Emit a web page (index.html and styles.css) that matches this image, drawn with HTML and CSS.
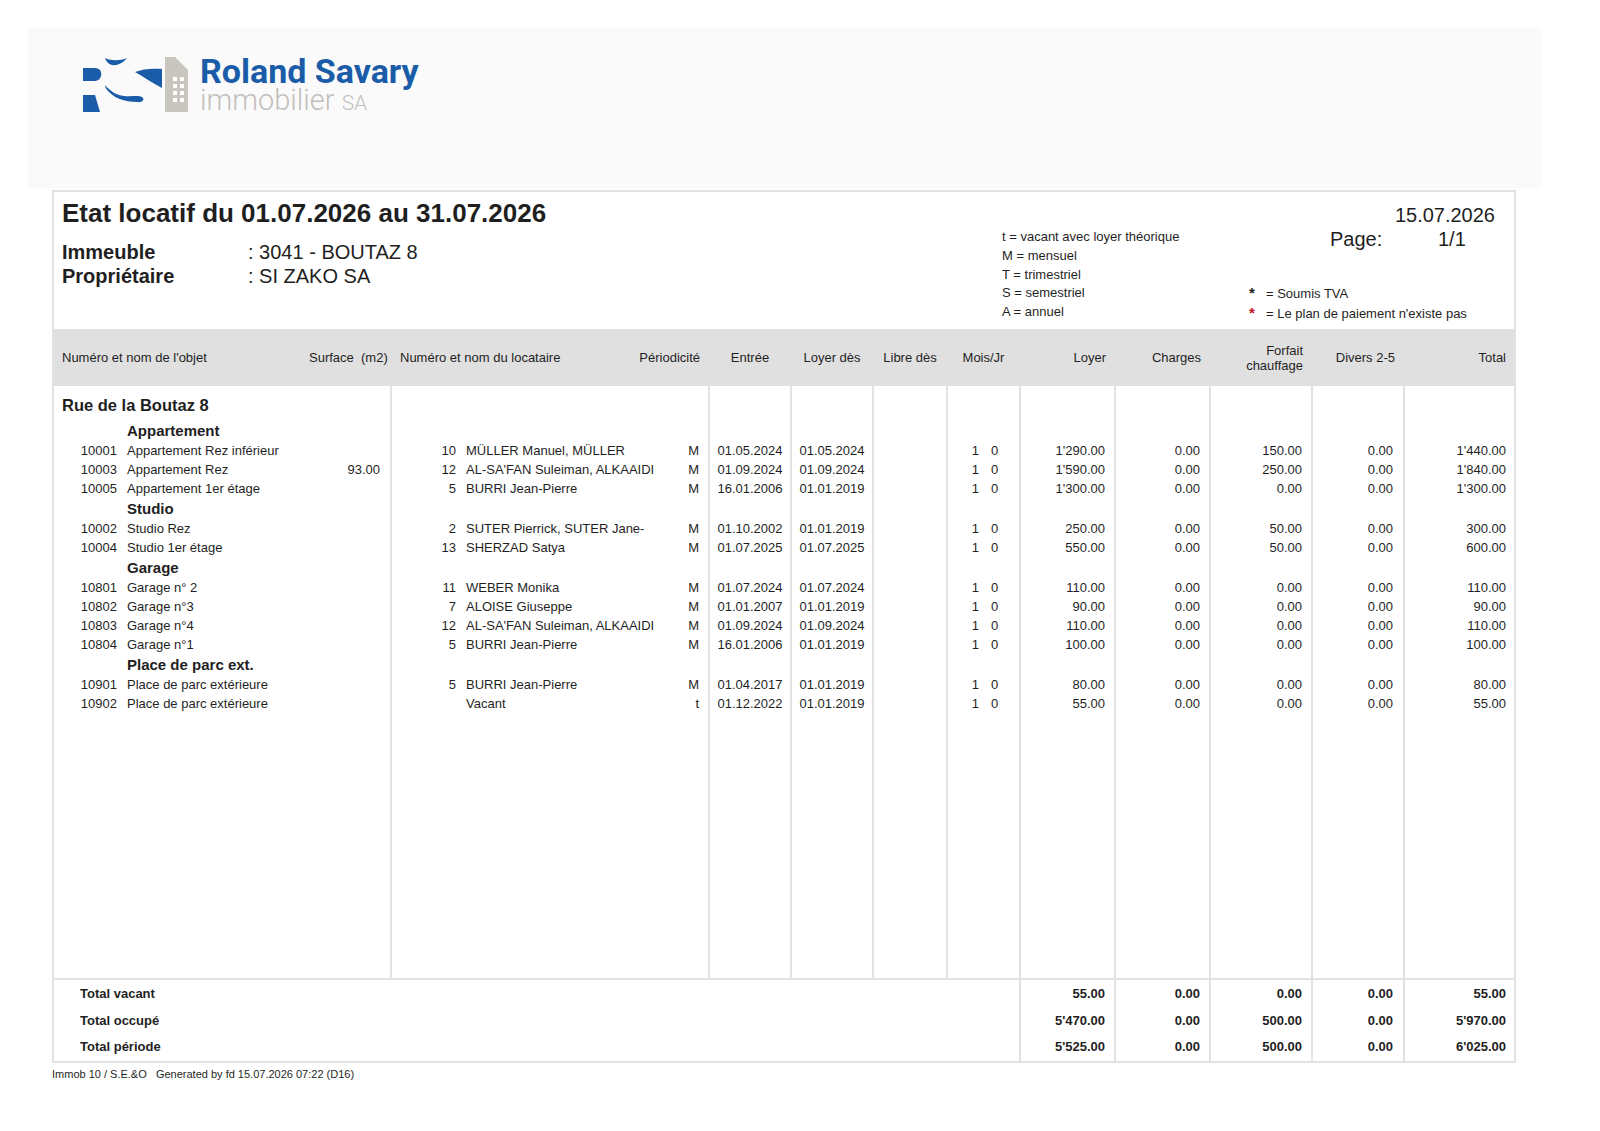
FILE: index.html
```html
<!DOCTYPE html>
<html lang="fr">
<head>
<meta charset="utf-8">
<title>Etat locatif</title>
<link rel="stylesheet" href="styles.css">
</head>
<body>
<div class="page">
  <header class="brand">
    <div class="logo">
      <svg class="logo-mark" width="110" height="58" viewBox="0 0 110 58" aria-hidden="true">
        <g fill="#1b5ca8">
          <path d="M3 13 H15 C20 13 22 17 21 21 C20 25 17 26 14 26 H3 Z"/>
          <path d="M3 40 H15 L20 57 H3 Z"/>
          <path d="M25 3 C31 6 40 6 47 3 C43 8 37 11 32 10 C28 9 26 6 25 3 Z"/>
          <path d="M25 30 C30 36 36 40 44 41 C52 42 58 40 62 42 C65 44 63 48 57 47 C47 47 36 44 30 38 C27 35 25 33 25 30 Z"/>
          <path d="M55 17 C62 14 72 13 82 14 V33 C74 29 64 22 55 17 Z"/>
        </g>
        <path fill="#c9c5bf" d="M85 2 H95 L108 15 V57 H85 Z"/>
        <g fill="#ffffff">
          <rect x="93" y="22" width="4" height="4"/><rect x="100" y="22" width="4" height="4"/>
          <rect x="93" y="29" width="4" height="4"/><rect x="100" y="29" width="4" height="4"/>
          <rect x="93" y="36" width="4" height="4"/><rect x="100" y="36" width="4" height="4"/>
          <rect x="93" y="43" width="4" height="4"/><rect x="100" y="43" width="4" height="4"/>
        </g>
      </svg>
      <div class="logo-text">
        <div class="logo-name">Roland Savary</div>
        <div class="logo-sub">immobilier <span class="logo-sa">SA</span></div>
      </div>
    </div>
  </header>

  <section class="report">
    <div class="report-head">
      <div class="head-main">
        <h1 class="title">Etat locatif du 01.07.2026 au 31.07.2026</h1>
        <div class="info">
          <div class="info-label">Immeuble</div><div class="info-value">: 3041 - BOUTAZ 8</div>
          <div class="info-label">Propriétaire</div><div class="info-value">: SI ZAKO SA</div>
        </div>
      </div>
      <ul class="legend">
        <li>t = vacant avec loyer théorique</li>
        <li>M = mensuel</li>
        <li>T = trimestriel</li>
        <li>S = semestriel</li>
        <li>A = annuel</li>
      </ul>
      <div class="head-side">
        <div class="date">15.07.2026</div>
        <div class="page-no"><span class="page-label">Page:</span><span>1/1</span></div>
        <ul class="stars">
          <li><span class="star">*</span>= Soumis TVA</li>
          <li><span class="star red">*</span>= Le plan de paiement n'existe pas</li>
        </ul>
      </div>
    </div>

    <table class="grid">
      <colgroup>
        <col class="w-c1"><col class="w-c2"><col class="w-c3">
        <col class="w-c4"><col class="w-c5"><col class="w-c6">
        <col class="w-c7"><col class="w-c8"><col class="w-c9"><col class="w-c10">
        <col class="w-c11"><col class="w-c12"><col class="w-c13"><col class="w-c14"><col class="w-c15">
      </colgroup>
      <thead>
        <tr>
          <th colspan="2" class="h-left">Numéro et nom de l'objet</th>
          <th class="h-right">Surface&nbsp;&nbsp;(m2)</th>
          <th colspan="3"><div class="h-split"><span>Numéro et nom du locataire</span><span>Périodicité</span></div></th>
          <th class="h-center">Entrée</th>
          <th class="h-center">Loyer dès</th>
          <th class="h-center">Libre dès</th>
          <th class="h-center">Mois/Jr</th>
          <th class="h-right">Loyer</th>
          <th class="h-right">Charges</th>
          <th class="h-right h-two">Forfait<br>chauffage</th>
          <th class="h-right">Divers 2-5</th>
          <th class="h-right h-last">Total</th>
        </tr>
      </thead>
      <tbody>
        <tr class="street">
          <td colspan="3" class="street-name">Rue de la Boutaz 8</td>
          <td colspan="3" class="sep"></td>
          <td class="sep"></td><td class="sep"></td><td class="sep"></td><td class="sep"></td>
          <td class="sep"></td><td class="sep"></td><td class="sep"></td><td class="sep"></td><td class="sep"></td>
        </tr>

        <tr class="group">
          <td></td><td class="group-name">Appartement</td><td></td>
          <td colspan="3" class="sep"></td>
          <td class="sep"></td><td class="sep"></td><td class="sep"></td><td class="sep"></td>
          <td class="sep"></td><td class="sep"></td><td class="sep"></td><td class="sep"></td><td class="sep"></td>
        </tr>
        <tr>
          <td class="no">10001</td><td class="name">Appartement Rez inférieur</td><td class="num3"></td>
          <td class="sep lno">10</td><td class="lname">MÜLLER Manuel, MÜLLER</td><td class="per">M</td>
          <td class="sep dt">01.05.2024</td><td class="sep dt">01.05.2024</td><td class="sep"></td>
          <td class="sep mj"><span class="mj-m">1</span><span class="mj-j">0</span></td>
          <td class="sep amt">1'290.00</td><td class="sep amt">0.00</td><td class="sep amt">150.00</td><td class="sep amt a14">0.00</td><td class="sep amt a15">1'440.00</td>
        </tr>
        <tr>
          <td class="no">10003</td><td class="name">Appartement Rez</td><td class="num3">93.00</td>
          <td class="sep lno">12</td><td class="lname">AL-SA'FAN Suleiman, ALKAAIDI</td><td class="per">M</td>
          <td class="sep dt">01.09.2024</td><td class="sep dt">01.09.2024</td><td class="sep"></td>
          <td class="sep mj"><span class="mj-m">1</span><span class="mj-j">0</span></td>
          <td class="sep amt">1'590.00</td><td class="sep amt">0.00</td><td class="sep amt">250.00</td><td class="sep amt a14">0.00</td><td class="sep amt a15">1'840.00</td>
        </tr>
        <tr>
          <td class="no">10005</td><td class="name">Appartement 1er étage</td><td class="num3"></td>
          <td class="sep lno">5</td><td class="lname">BURRI Jean-Pierre</td><td class="per">M</td>
          <td class="sep dt">16.01.2006</td><td class="sep dt">01.01.2019</td><td class="sep"></td>
          <td class="sep mj"><span class="mj-m">1</span><span class="mj-j">0</span></td>
          <td class="sep amt">1'300.00</td><td class="sep amt">0.00</td><td class="sep amt">0.00</td><td class="sep amt a14">0.00</td><td class="sep amt a15">1'300.00</td>
        </tr>

        <tr class="group">
          <td></td><td class="group-name">Studio</td><td></td>
          <td colspan="3" class="sep"></td>
          <td class="sep"></td><td class="sep"></td><td class="sep"></td><td class="sep"></td>
          <td class="sep"></td><td class="sep"></td><td class="sep"></td><td class="sep"></td><td class="sep"></td>
        </tr>
        <tr>
          <td class="no">10002</td><td class="name">Studio Rez</td><td class="num3"></td>
          <td class="sep lno">2</td><td class="lname">SUTER Pierrick, SUTER Jane-</td><td class="per">M</td>
          <td class="sep dt">01.10.2002</td><td class="sep dt">01.01.2019</td><td class="sep"></td>
          <td class="sep mj"><span class="mj-m">1</span><span class="mj-j">0</span></td>
          <td class="sep amt">250.00</td><td class="sep amt">0.00</td><td class="sep amt">50.00</td><td class="sep amt a14">0.00</td><td class="sep amt a15">300.00</td>
        </tr>
        <tr>
          <td class="no">10004</td><td class="name">Studio 1er étage</td><td class="num3"></td>
          <td class="sep lno">13</td><td class="lname">SHERZAD Satya</td><td class="per">M</td>
          <td class="sep dt">01.07.2025</td><td class="sep dt">01.07.2025</td><td class="sep"></td>
          <td class="sep mj"><span class="mj-m">1</span><span class="mj-j">0</span></td>
          <td class="sep amt">550.00</td><td class="sep amt">0.00</td><td class="sep amt">50.00</td><td class="sep amt a14">0.00</td><td class="sep amt a15">600.00</td>
        </tr>

        <tr class="group">
          <td></td><td class="group-name">Garage</td><td></td>
          <td colspan="3" class="sep"></td>
          <td class="sep"></td><td class="sep"></td><td class="sep"></td><td class="sep"></td>
          <td class="sep"></td><td class="sep"></td><td class="sep"></td><td class="sep"></td><td class="sep"></td>
        </tr>
        <tr>
          <td class="no">10801</td><td class="name">Garage n° 2</td><td class="num3"></td>
          <td class="sep lno">11</td><td class="lname">WEBER Monika</td><td class="per">M</td>
          <td class="sep dt">01.07.2024</td><td class="sep dt">01.07.2024</td><td class="sep"></td>
          <td class="sep mj"><span class="mj-m">1</span><span class="mj-j">0</span></td>
          <td class="sep amt">110.00</td><td class="sep amt">0.00</td><td class="sep amt">0.00</td><td class="sep amt a14">0.00</td><td class="sep amt a15">110.00</td>
        </tr>
        <tr>
          <td class="no">10802</td><td class="name">Garage n°3</td><td class="num3"></td>
          <td class="sep lno">7</td><td class="lname">ALOISE Giuseppe</td><td class="per">M</td>
          <td class="sep dt">01.01.2007</td><td class="sep dt">01.01.2019</td><td class="sep"></td>
          <td class="sep mj"><span class="mj-m">1</span><span class="mj-j">0</span></td>
          <td class="sep amt">90.00</td><td class="sep amt">0.00</td><td class="sep amt">0.00</td><td class="sep amt a14">0.00</td><td class="sep amt a15">90.00</td>
        </tr>
        <tr>
          <td class="no">10803</td><td class="name">Garage n°4</td><td class="num3"></td>
          <td class="sep lno">12</td><td class="lname">AL-SA'FAN Suleiman, ALKAAIDI</td><td class="per">M</td>
          <td class="sep dt">01.09.2024</td><td class="sep dt">01.09.2024</td><td class="sep"></td>
          <td class="sep mj"><span class="mj-m">1</span><span class="mj-j">0</span></td>
          <td class="sep amt">110.00</td><td class="sep amt">0.00</td><td class="sep amt">0.00</td><td class="sep amt a14">0.00</td><td class="sep amt a15">110.00</td>
        </tr>
        <tr>
          <td class="no">10804</td><td class="name">Garage n°1</td><td class="num3"></td>
          <td class="sep lno">5</td><td class="lname">BURRI Jean-Pierre</td><td class="per">M</td>
          <td class="sep dt">16.01.2006</td><td class="sep dt">01.01.2019</td><td class="sep"></td>
          <td class="sep mj"><span class="mj-m">1</span><span class="mj-j">0</span></td>
          <td class="sep amt">100.00</td><td class="sep amt">0.00</td><td class="sep amt">0.00</td><td class="sep amt a14">0.00</td><td class="sep amt a15">100.00</td>
        </tr>

        <tr class="group">
          <td></td><td class="group-name">Place de parc ext.</td><td></td>
          <td colspan="3" class="sep"></td>
          <td class="sep"></td><td class="sep"></td><td class="sep"></td><td class="sep"></td>
          <td class="sep"></td><td class="sep"></td><td class="sep"></td><td class="sep"></td><td class="sep"></td>
        </tr>
        <tr>
          <td class="no">10901</td><td class="name">Place de parc extérieure</td><td class="num3"></td>
          <td class="sep lno">5</td><td class="lname">BURRI Jean-Pierre</td><td class="per">M</td>
          <td class="sep dt">01.04.2017</td><td class="sep dt">01.01.2019</td><td class="sep"></td>
          <td class="sep mj"><span class="mj-m">1</span><span class="mj-j">0</span></td>
          <td class="sep amt">80.00</td><td class="sep amt">0.00</td><td class="sep amt">0.00</td><td class="sep amt a14">0.00</td><td class="sep amt a15">80.00</td>
        </tr>
        <tr>
          <td class="no">10902</td><td class="name">Place de parc extérieure</td><td class="num3"></td>
          <td class="sep lno"></td><td class="lname">Vacant</td><td class="per">t</td>
          <td class="sep dt">01.12.2022</td><td class="sep dt">01.01.2019</td><td class="sep"></td>
          <td class="sep mj"><span class="mj-m">1</span><span class="mj-j">0</span></td>
          <td class="sep amt">55.00</td><td class="sep amt">0.00</td><td class="sep amt">0.00</td><td class="sep amt a14">0.00</td><td class="sep amt a15">55.00</td>
        </tr>

        <tr class="filler">
          <td colspan="3"></td>
          <td colspan="3" class="sep"></td>
          <td class="sep"></td><td class="sep"></td><td class="sep"></td><td class="sep"></td>
          <td class="sep"></td><td class="sep"></td><td class="sep"></td><td class="sep"></td><td class="sep"></td>
        </tr>
      </tbody>
      <tfoot>
        <tr class="tot-first">
          <td colspan="10" class="tot-label">Total vacant</td>
          <td class="sep amt">55.00</td><td class="sep amt">0.00</td><td class="sep amt">0.00</td><td class="sep amt a14">0.00</td><td class="sep amt a15">55.00</td>
        </tr>
        <tr>
          <td colspan="10" class="tot-label">Total occupé</td>
          <td class="sep amt">5'470.00</td><td class="sep amt">0.00</td><td class="sep amt">500.00</td><td class="sep amt a14">0.00</td><td class="sep amt a15">5'970.00</td>
        </tr>
        <tr>
          <td colspan="10" class="tot-label">Total période</td>
          <td class="sep amt">5'525.00</td><td class="sep amt">0.00</td><td class="sep amt">500.00</td><td class="sep amt a14">0.00</td><td class="sep amt a15">6'025.00</td>
        </tr>
      </tfoot>
    </table>
  </section>

  <footer class="foot">Immob 10 / S.E.&amp;O&nbsp;&nbsp;&nbsp;Generated by fd 15.07.2026 07:22 (D16)</footer>
</div>
</body>
</html>
```

FILE: styles.css
```css
* { box-sizing: border-box; }

html, body {
  margin: 0;
  padding: 0;
  background: #ffffff;
}

body {
  font-family: "Liberation Sans", Arial, Helvetica, sans-serif;
  color: #1f1f1f;
  width: 1600px;
}

.page {
  padding-top: 28px;
}

/* ---------- Brand band ---------- */
.brand {
  margin-left: 28px;
  width: 1514px;
  height: 160px;
  background: #fafafa;
  padding: 27px 0 0 52px;
}

.logo {
  display: flex;
  align-items: flex-start;
  gap: 10px;
}

.logo-mark {
  display: block;
  flex: none;
}

.logo-text {
  display: flex;
  flex-direction: column;
}

.logo-name {
  font-family: Roboto, "Liberation Sans", sans-serif;
  font-weight: 700;
  font-size: 34px;
  line-height: 32px;
  letter-spacing: 0;
  color: #1b5ca8;
}

.logo-sub {
  font-family: Roboto, "Liberation Sans", sans-serif;
  font-weight: 300;
  font-size: 29px;
  line-height: 26px;
  color: #c3bfba;
}

.logo-sa {
  font-size: 21px;
}

/* ---------- Report box ---------- */
.report {
  margin-top: 2px;
  margin-left: 52px;
  width: 1464px;
  border: 2px solid #e2e2e2;
}

.report-head {
  height: 137px;
  display: flex;
}

.head-main {
  flex: 1;
  padding-left: 8px;
}

.title {
  margin: 6px 0 0;
  font-size: 26px;
  line-height: 30px;
  font-weight: 700;
}

.info {
  margin-top: 12px;
  display: grid;
  grid-template-columns: 186px auto;
  font-size: 20px;
  line-height: 24px;
}

.info-label {
  font-weight: 700;
}

.legend {
  list-style: none;
  margin: 0;
  padding: 36px 0 0;
  width: 247px;
  font-size: 13px;
  line-height: 18.75px;
}

.head-side {
  width: 265px;
  display: flex;
  flex-direction: column;
}

.date {
  margin-top: 11px;
  text-align: right;
  padding-right: 19px;
  font-size: 20px;
  line-height: 24px;
}

.page-no {
  padding-left: 81px;
  font-size: 20px;
  line-height: 24px;
}

.page-label {
  display: inline-block;
  width: 108px;
}

.stars {
  list-style: none;
  margin: auto 0 6px;
  padding: 0;
  font-size: 13px;
  line-height: 19px;
}

.star {
  display: inline-block;
  width: 17px;
  font-size: 15px;
  font-weight: 700;
}

.star.red {
  color: #c4161c;
}

/* ---------- Table ---------- */
.grid {
  width: 1460px;
  table-layout: fixed;
  border-collapse: collapse;
  font-size: 13px;
}

.w-c1 { width: 68px; }
.w-c2 { width: 178px; }
.w-c3 { width: 91px; }
.w-c4 { width: 70px; }
.w-c5 { width: 209px; }
.w-c6 { width: 39px; }
.w-c7 { width: 82px; }
.w-c8 { width: 82px; }
.w-c9 { width: 74px; }
.w-c10 { width: 73px; }
.w-c11 { width: 95px; }
.w-c12 { width: 95px; }
.w-c13 { width: 102px; }
.w-c14 { width: 92px; }
.w-c15 { width: 110px; }

.grid thead th {
  background: #e0e0e0;
  height: 57px;
  padding: 0 9px;
  font-weight: 400;
  font-size: 13px;
  line-height: 15px;
  white-space: nowrap;
  vertical-align: middle;
}

.h-left { text-align: left; padding-left: 8px !important; }
.h-right { text-align: right; }
.h-center { text-align: center; padding: 0 !important; }
.h-last { padding-right: 8px !important; }
.h-two { line-height: 15px !important; }

.h-split {
  display: flex;
  justify-content: space-between;
}

.grid td {
  padding: 0;
  white-space: nowrap;
  overflow: hidden;
  line-height: 19px;
  vertical-align: middle;
}

.grid .sep {
  border-left: 2px solid #e2e2e2;
}

.street td {
  line-height: 30px;
  padding-top: 4px;
}

.street-name {
  padding-left: 8px !important;
  font-size: 16.5px;
  font-weight: 700;
}

.group td {
  line-height: 21px;
}

.group-name {
  padding-left: 5px !important;
  font-size: 15px;
  font-weight: 700;
  overflow: visible !important;
}

.no { text-align: right; padding-right: 5px !important; }
.name { padding-left: 5px !important; }
.num3 { text-align: right; padding-right: 10px !important; }
.lno { text-align: right; padding-right: 5px !important; }
.lname { padding-left: 5px !important; }
.per { text-align: right; padding-right: 9px !important; }
.dt { text-align: center; }
.amt { text-align: right; padding-right: 9px !important; }
.a14 { padding-right: 10px !important; }
.a15 { padding-right: 8px !important; }

.mj-m {
  display: inline-block;
  width: 31px;
  text-align: right;
}

.mj-j {
  display: inline-block;
  margin-left: 12px;
}

.filler td {
  height: 266px;
}

.grid tfoot td {
  line-height: 26.5px;
  font-weight: 700;
}

.tot-first td {
  border-top: 2px solid #e2e2e2;
}

.tot-first .tot-label,
.tot-first .amt {
  padding-top: 1px !important;
}

.tot-label {
  padding-left: 26px !important;
}

/* ---------- Footer ---------- */
.foot {
  margin: 4px 0 0 52px;
  font-size: 11px;
  line-height: 14px;
}
```
